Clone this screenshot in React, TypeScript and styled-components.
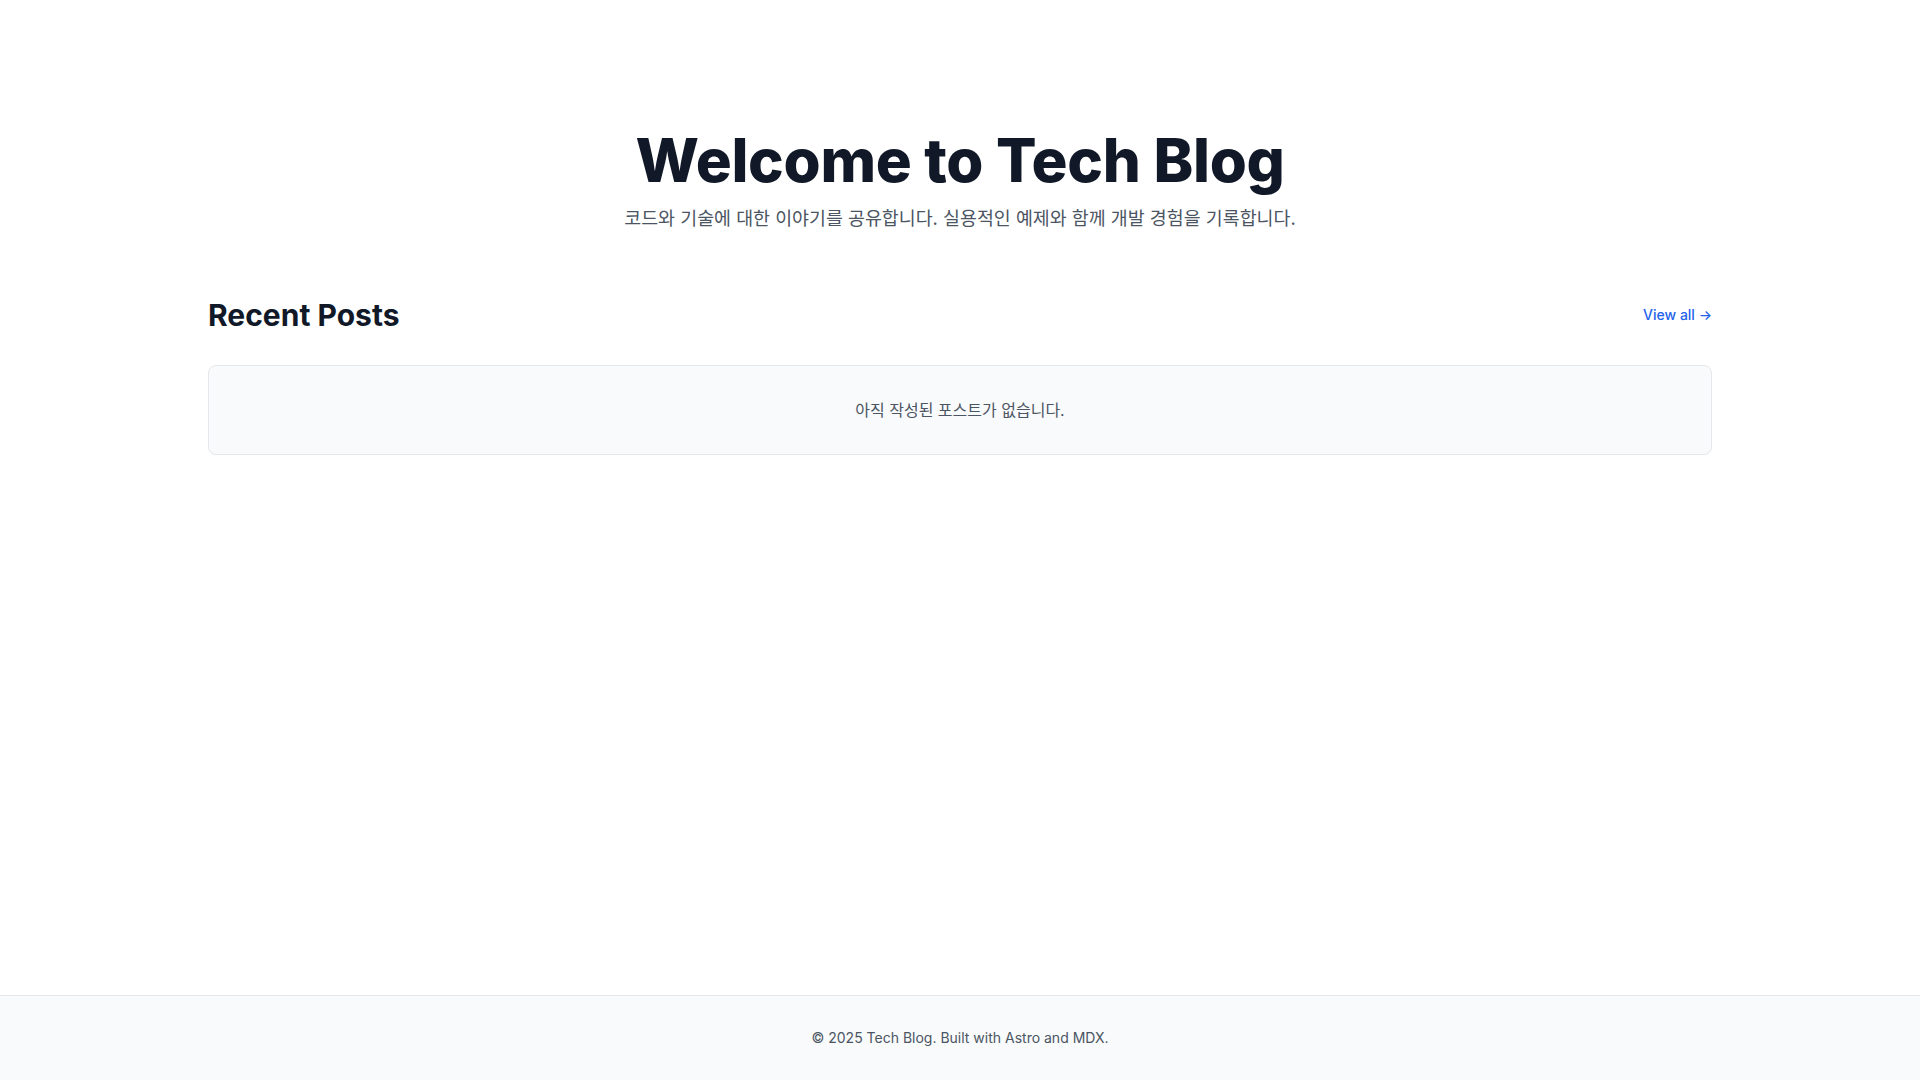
import React from 'react';
import styled, { createGlobalStyle } from 'styled-components';

const GlobalStyle = createGlobalStyle`
  * {
    box-sizing: border-box;
  }

  html,
  body {
    margin: 0;
    padding: 0;
    background-color: #ffffff;
    font-family: Inter, 'Noto Sans CJK KR', sans-serif;
    color: #111827;
  }
`;

const Page = styled.div`
  min-height: 100vh;
  display: flex;
  flex-direction: column;
`;

const Main = styled.main`
  flex: 1;
  width: 100%;
  max-width: 1536px;
  margin: 0 auto;
  padding: 130px 16px 0;
`;

const Hero = styled.section`
  display: flex;
  flex-direction: column;
  align-items: center;
  text-align: center;
  margin-bottom: 65px;
`;

const HeroTitle = styled.h1`
  margin: 0 0 14px;
  font-size: 60px;
  line-height: 1;
  font-weight: 800;
  letter-spacing: -0.3px;
  color: #111827;
`;

const HeroSubtitle = styled.p`
  margin: 0;
  font-size: 18.4px;
  line-height: 28px;
  color: #4b5563;
`;

const SectionHeader = styled.div`
  display: flex;
  justify-content: space-between;
  align-items: center;
  margin-bottom: 32px;
`;

const SectionTitle = styled.h2`
  margin: 0;
  font-size: 30px;
  line-height: 36px;
  font-weight: 700;
  color: #111827;
`;

const ViewAllLink = styled.a`
  font-size: 14px;
  line-height: 20px;
  font-weight: 500;
  color: #2563eb;
  text-decoration: none;

  &:hover {
    text-decoration: underline;
  }
`;

const EmptyCard = styled.div`
  background-color: #f9fafb;
  border: 1px solid #e5e7eb;
  border-radius: 8px;
  padding: 32px;
  text-align: center;
  font-size: 16px;
  line-height: 24px;
  color: #4b5563;
`;

const Footer = styled.footer`
  background-color: #f9fafb;
  border-top: 1px solid #e5e7eb;
  padding: 32px 16px;
  text-align: center;
  font-size: 14px;
  line-height: 20px;
  color: #4b5563;
`;

const App: React.FC = () => {
  const posts: string[] = [];

  return (
    <Page>
      <GlobalStyle />
      <Main>
        <Hero>
          <HeroTitle>Welcome to Tech Blog</HeroTitle>
          <HeroSubtitle>
            코드와 기술에 대한 이야기를 공유합니다. 실용적인 예제와 함께 개발 경험을 기록합니다.
          </HeroSubtitle>
        </Hero>

        <section>
          <SectionHeader>
            <SectionTitle>Recent Posts</SectionTitle>
            <ViewAllLink href="#">View all →</ViewAllLink>
          </SectionHeader>
          {posts.length === 0 && <EmptyCard>아직 작성된 포스트가 없습니다.</EmptyCard>}
        </section>
      </Main>

      <Footer>© 2025 Tech Blog. Built with Astro and MDX.</Footer>
    </Page>
  );
};

export default App;
